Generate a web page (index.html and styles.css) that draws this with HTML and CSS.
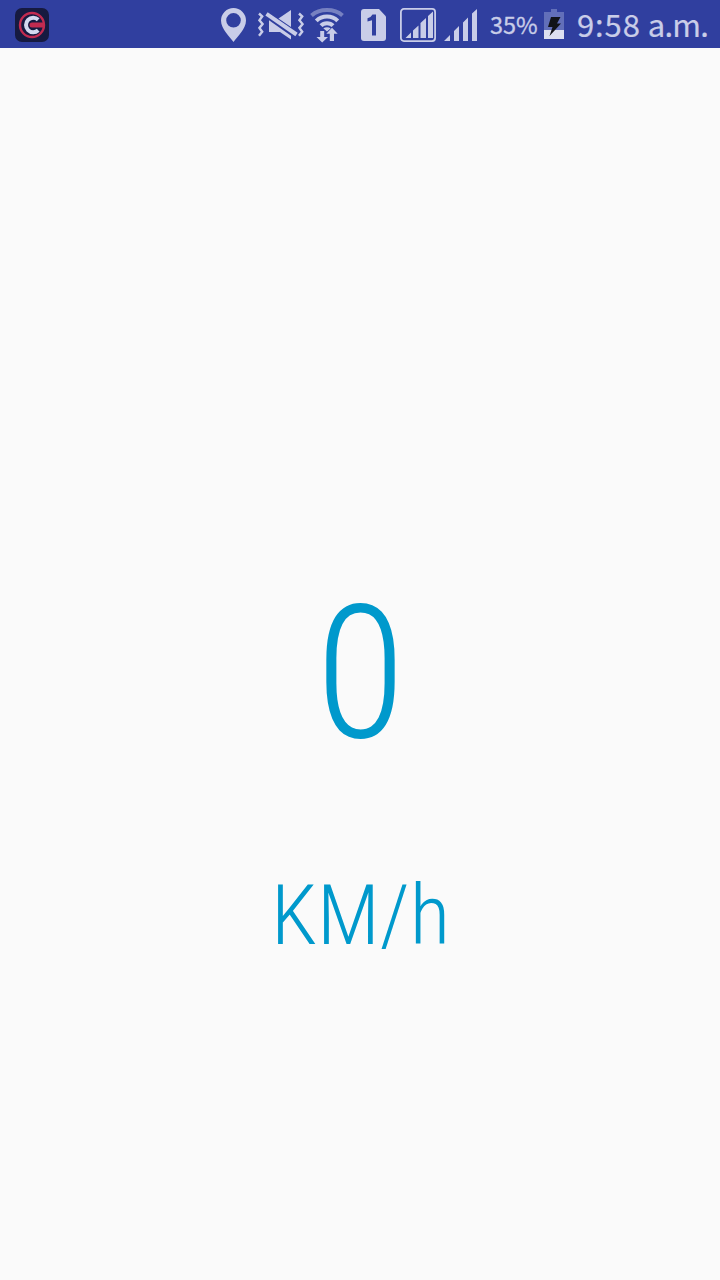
FILE: index.html
```
<!DOCTYPE html>
<html lang="en">
<head>
<meta charset="utf-8">
<meta name="viewport" content="width=device-width">
<title>Speedometer</title>
<link rel="stylesheet" href="styles.css">
</head>
<body>
<header class="status-bar">
  <svg class="app-icon" width="34" height="34" viewBox="0 0 34 34">
    <rect width="34" height="34" rx="7" fill="#161a40"/>
    <circle cx="17" cy="17" r="12" fill="none" stroke="#c22b50" stroke-width="2.4"/>
    <path d="M23.2 11.8A7.200 7.200 0 1 0 23.200 22.200" fill="none" stroke="#d3d9ef" stroke-width="4"/>
    <path d="M17 14.500h12v5H17a2.500 2.500 0 0 1 0-5z" fill="#c22b50"/>
  </svg>
  <div class="tray">
    <svg class="location" width="25" height="34" viewBox="0 0 25 34">
      <path fill-rule="evenodd" d="M12.5 0A12.5 12.5 0 0 0 0 12.5C0 21 9 29 12.5 34C16 29 25 21 25 12.5A12.5 12.5 0 0 0 12.5 0zM12.5 5a7.3 7.3 0 1 1 0 14.6a7.3 7.3 0 0 1 0-14.6z"/>
    </svg>
    <svg class="mute" width="46" height="32" viewBox="0 0 46 32">
      <path d="M11 11.300l22 15.400V30.500L22 23H11z"/>
      <path d="M20.500 9.500L33 1v17z"/>
      <path d="M8.500 4.800L38.500 25.500" fill="none" stroke="#c9cde8" stroke-width="4"/>
      <path d="M1 4.500l3.200 3-2.800 3.800 3.200 3.800-3.200 3.800 2.800 3.800-3.200 4M41 4.500l3.200 3-2.800 3.800 3.200 3.800-3.200 3.800 2.800 3.800-3.200 4" fill="none" stroke="#c9cde8" stroke-width="2.4"/>
    </svg>
    <svg class="wifi" width="34" height="35" viewBox="0 0 34 35">
      <g fill="none" stroke="#c9cde8" stroke-width="4">
        <path d="M1.500 7.500C9.800.2 24.200.2 32.500 7.500" stroke="#7781c1"/>
        <path d="M6.300 12.800C12 7 22 7 27.700 12.800M11 17.600c3-3.200 9-3.200 12 0"/>
      </g>
      <path d="M13.300 20.200q3.700-2 7.400 0L17 23.500zM10.200 23h4v6H18l-5.800 5.500L6.500 29h3.700zM19.800 33v-7.300h-3.500l5.700-5.900 5.700 5.900H24V33z"/>
    </svg>
    <svg class="sim" width="25" height="32" viewBox="0 0 25 32">
      <path d="M3 0h15l7 7.5V29q0 3-3 3H3q-3 0-3-3V3q0-3 3-3z"/>
      <path d="M11.500 5.500H15V26.500h-4V11.200L6.500 12.500V9.200Q10 8.500 11.500 5.500z" fill="#303f9f"/>
    </svg>
    <svg class="signal-boxed" width="36" height="34" viewBox="0 0 36 34">
      <rect x=".9" y=".9" width="34.2" height="32.2" rx="3" fill="none" stroke="#c9cde8" stroke-width="1.8"/>
      <path d="M5.500 30L11 24.500V30zM13 22.500l5.500-5V30H13zM20.500 15L26 10v20h-5.500zM28 8L33 3.500V30h-5z"/>
    </svg>
    <svg class="signal" width="33" height="32" viewBox="0 0 33 32">
      <path d="M0 32l6-6v6zM10 22l5-5v15h-5zM19 13.500l5-5V32h-5zM28 4.500L33 0v32h-5z"/>
    </svg>
    <span class="percent">35%</span>
    <svg class="battery" width="20" height="30" viewBox="0 0 20 30">
      <path d="M0 3h7V0h6v3h7v18H0z" fill="#626fb9"/>
      <path d="M0 21h20v9H0z" fill="#dcdff0"/>
      <path d="M7 8h9.500l-3.500 6.500h4L5.500 27l3-9H4z" fill="#111318"/>
    </svg>
    <time class="clock"><span class="digits">9:58</span> <span class="period">a.m.</span></time>
  </div>
</header>
<main class="speedometer">
  <div class="speed">0</div>
  <div class="unit">KM/h</div>
</main>
</body>
</html>
```
FILE: styles.css
```
* { box-sizing: border-box; }

body {
  margin: 0;
  height: 1280px;
  overflow: hidden;
  display: flex;
  flex-direction: column;
  background: #fafafa;
}

.status-bar {
  flex: none;
  height: 48px;
  padding: 8px 12px 0 15px;
  display: flex;
  justify-content: space-between;
  align-items: flex-start;
  background: #303f9f;
  color: #c9cde8;
  font-family: "Noto Sans CJK SC", "Noto Sans", sans-serif;
}

svg { display: block; flex: none; fill: #c9cde8; }

.tray { display: flex; align-items: flex-start; width: 487px; }
.location { margin-right: 12px; }
.mute { margin: 1px 6px 0 0; }
.wifi { margin-right: 17px; }
.sim { margin: 1px 14px 0 0; }
.signal-boxed { margin-right: 8px; }
.signal { margin: 1px 13px 0 0; }
.percent { width: 48px; margin-right: 6px; font-size: 23.5px; line-height: 33px; white-space: nowrap; -webkit-text-stroke: 0.3px currentColor; }
.battery { margin: 1px 13px 0 0; }
.clock { font-size: 31px; line-height: 32px; white-space: nowrap; -webkit-text-stroke: 0.2px currentColor; }
.digits { letter-spacing: 0.9px; }
.period { letter-spacing: -0.8px; }

.speedometer {
  flex: 1;
  display: flex;
  flex-direction: column;
  align-items: center;
  padding: 514px 0 0 1px;
  color: #0099cc;
  font-family: Roboto, sans-serif;
  font-weight: 300;
  font-stretch: 75%;
}

.speed { font-size: 185px; line-height: 224px; }
.unit { margin-top: 80px; font-size: 84px; line-height: 100px; }
```
